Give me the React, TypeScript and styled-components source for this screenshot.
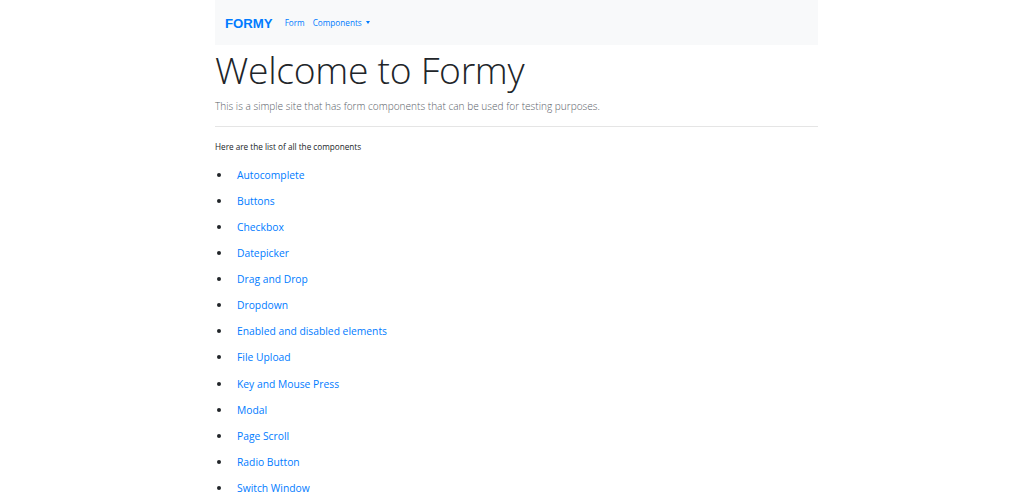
import React from "react";
import styled, { createGlobalStyle } from "styled-components";

const Global = createGlobalStyle`
  html, body { margin: 0; padding: 0; background: #fff; overflow: hidden; }
  body { font-family: "Open Sans", "Noto Sans", sans-serif; color: #212529; }
`;

const Page = styled.div`
  width: 603px;
  margin-left: 215px;
`;

const NavBar = styled.nav`
  height: 45px;
  background: #f8f9fa;
  display: flex;
  align-items: center;
  padding: 0 10px;
  box-sizing: border-box;
`;

const Brand = styled.a`
  font-family: "Liberation Sans", Arial, sans-serif;
  font-weight: 700;
  font-size: 13.2px;
  color: #007bff;
  text-decoration: none;
  margin-right: 12px;
  padding-top: 1px;
`;

const NavLink = styled.a<{ $gap?: number }>`
  font-size: 8.2px;
  color: #007bff;
  text-decoration: none;
  display: flex;
  align-items: center;
  gap: 4px;
  margin-right: ${(p) => p.$gap ?? 0}px;
`;

const Caret = styled.span`
  display: inline-block;
  width: 0;
  height: 0;
  border-left: 2.5px solid transparent;
  border-right: 2.5px solid transparent;
  border-top: 3px solid #007bff;
`;

const Title = styled.h1`
  font-weight: 300;
  font-size: 37.3px;
  line-height: 1.2;
  margin: 3px 0 6px 0;
  letter-spacing: -0.3px;
  color: #212529;
`;

const Lead = styled.p`
  font-weight: 300;
  font-size: 10.1px;
  margin: 0;
  color: #5a6169;
`;

const Rule = styled.hr`
  border: 0;
  border-top: 1px solid rgba(0, 0, 0, 0.1);
  margin: 13px 0 14px 0;
`;

const Intro = styled.p`
  font-size: 8.2px;
  margin: 0 0 10px 0;
  color: #212529;
`;

const List = styled.ul`
  list-style: none;
  margin: 0;
  padding: 0;
`;

const Item = styled.li`
  height: 26.1px;
  display: flex;
  align-items: center;
`;

const Bullet = styled.span`
  width: 4px;
  height: 4px;
  border-radius: 50%;
  background: #212529;
  margin: 0 16px 0 2px;
`;

const ItemLink = styled.a`
  font-size: 10.3px;
  color: #007bff;
  text-decoration: none;
`;

const items = [
  "Autocomplete",
  "Buttons",
  "Checkbox",
  "Datepicker",
  "Drag and Drop",
  "Dropdown",
  "Enabled and disabled elements",
  "File Upload",
  "Key and Mouse Press",
  "Modal",
  "Page Scroll",
  "Radio Button",
  "Switch Window",
];

export default function App() {
  return (
    <>
      <Global />
      <Page>
        <NavBar>
          <Brand href="#">FORMY</Brand>
          <NavLink href="#" $gap={8}>Form</NavLink>
          <NavLink href="#">
            Components <Caret />
          </NavLink>
        </NavBar>
        <Title>Welcome to Formy</Title>
        <Lead>This is a simple site that has form components that can be used for testing purposes.</Lead>
        <Rule />
        <Intro>Here are the list of all the components</Intro>
        <List>
          {items.map((t) => (
            <Item key={t}>
              <Bullet />
              <ItemLink href="#">{t}</ItemLink>
            </Item>
          ))}
        </List>
      </Page>
    </>
  );
}
